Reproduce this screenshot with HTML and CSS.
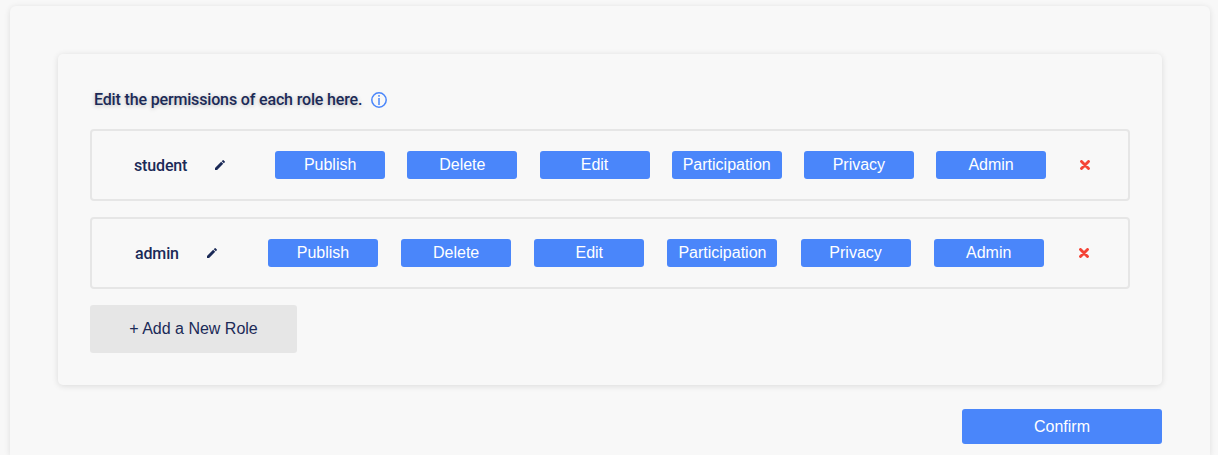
FILE: index.html
```html
<!DOCTYPE html>
<html lang="en">
<head>
<meta charset="utf-8">
<title>Role permissions</title>
<link rel="stylesheet" href="styles.css">
</head>
<body>
<main class="page">
  <section class="card">
    <h1 class="title"><span>Edit the permissions of each role here.</span>
      <svg class="info" viewBox="0 0 16 16" fill="none" stroke="#4a86fa"><circle cx="8" cy="8" r="7.2" stroke-width="1.5"/><path d="M8 6V13M8 3V4.7" stroke-width="1.5"/></svg>
    </h1>
    <div class="role role-student">
      <span class="name">student</span>
      <svg class="pencil" viewBox="3 3 18 18"><path d="M3 17.25V21h3.75L17.81 9.94l-3.75-3.75L3 17.25zM20.71 7.04a1 1 0 0 0 0-1.41l-2.34-2.34a1 1 0 0 0-1.41 0l-1.83 1.83 3.75 3.75 1.83-1.83z"/></svg>
      <div class="permissions"><button>Publish</button><button>Delete</button><button>Edit</button><button>Participation</button><button>Privacy</button><button>Admin</button></div>
      <svg class="remove" viewBox="0 0 10 10"><path d="M1.5 1.5L8.5 8.5M8.5 1.5L1.5 8.5"/></svg>
    </div>
    <div class="role role-admin">
      <span class="name">admin</span>
      <svg class="pencil" viewBox="3 3 18 18"><path d="M3 17.25V21h3.75L17.81 9.94l-3.75-3.75L3 17.25zM20.71 7.04a1 1 0 0 0 0-1.41l-2.34-2.34a1 1 0 0 0-1.41 0l-1.83 1.83 3.75 3.75 1.83-1.83z"/></svg>
      <div class="permissions"><button>Publish</button><button>Delete</button><button>Edit</button><button>Participation</button><button>Privacy</button><button>Admin</button></div>
      <svg class="remove" viewBox="0 0 10 10"><path d="M1.5 1.5L8.5 8.5M8.5 1.5L1.5 8.5"/></svg>
    </div>
    <button class="add">+ Add a New Role</button>
  </section>
  <button class="confirm">Confirm</button>
</main>
</body>
</html>
```
FILE: styles.css
```css
* { box-sizing: border-box; }
body {
  margin: 0;
  height: 455px;
  overflow: hidden;
  padding: 6px 8px 0 10px;
  background: #f8f8f8;
  color: #1b2a57;
  font-family: Roboto, "Liberation Sans", sans-serif;
}
button {
  margin: 0;
  padding: 0;
  border: 0;
  border-radius: 3px;
  background: #4a86fa;
  color: #fff;
  font: 16px "Liberation Sans", Arial, sans-serif;
}
.page {
  display: flex;
  flex-direction: column;
  width: 1200px;
  height: 449px;
  padding: 48px 48px 0;
  border-radius: 6px 6px 0 0;
  box-shadow: 0 1px 6px rgba(0, 0, 0, .11);
}
.card {
  flex: none;
  height: 331px;
  padding: 32px;
  border-radius: 5px;
  box-shadow: 0 1px 6px rgba(0, 0, 0, .12);
}
.title {
  display: flex;
  align-items: center;
  gap: 9px;
  height: 27px;
  margin: 0 0 16px 4px;
  font-size: 16px;
  font-weight: 500;
  letter-spacing: -.155px;
  text-shadow: 0 1px 4px rgba(0, 0, 0, .25);
}
.info { width: 16px; height: 16px; }
.role {
  display: flex;
  align-items: center;
  height: 72px;
  margin-bottom: 16px;
  border: 2px solid #e6e6e6;
  border-radius: 4px;
}
.role-student { padding-left: 42px; }
.role-admin { padding-left: 43px; }
.name {
  width: 81px;
  font-size: 16px;
  font-weight: 500;
  letter-spacing: -.15px;
}
.role-admin .name { width: 72px; }
.pencil { width: 10px; height: 10px; fill: #1b2a57; }
.permissions { display: flex; gap: 22.2px; margin-left: 50.15px; }
.role-admin .permissions { gap: 23.15px; margin-left: 51px; }
.permissions button { width: 110px; height: 28px; padding-bottom: 1px; }
.remove {
  width: 10px;
  height: 10px;
  margin-left: 34px;
  fill: none;
  stroke: #f44336;
  stroke-width: 2.9;
  stroke-linecap: round;
}
.role-admin .remove { margin-left: 35px; }
.add {
  width: 207px;
  height: 48px;
  background: #e6e6e6;
  color: #1b2a57;
}
.confirm {
  align-self: flex-end;
  width: 200px;
  height: 35px;
  margin-top: 24px;
}
```
